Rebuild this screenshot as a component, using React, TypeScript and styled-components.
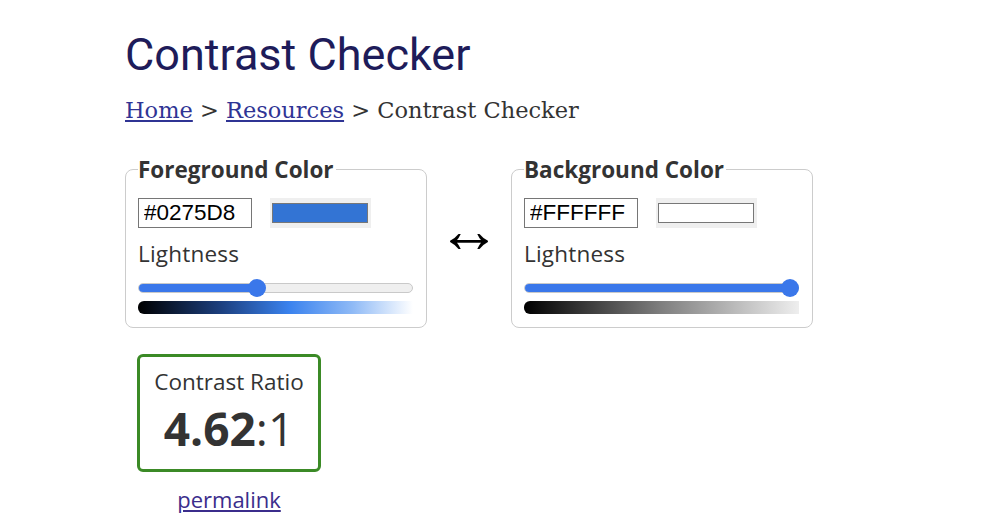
import React from "react";
import styled, { createGlobalStyle } from "styled-components";

const Global = createGlobalStyle`
  html, body { margin: 0; padding: 0; background: #ffffff; }
  body { font-family: "Open Sans", sans-serif; color: #333333; }
`;

const Page = styled.main`
  padding: 29px 0 0 125px;
`;

const Title = styled.h1`
  margin: 0;
  font-family: Roboto, sans-serif;
  font-weight: 400;
  font-size: 45px;
  line-height: 52px;
  color: #1e1c5a;
`;

const Crumbs = styled.nav`
  margin-top: 16px;
  font-family: "DejaVu Serif", serif;
  font-size: 22.5px;
  color: #333333;
`;

const CrumbLink = styled.a`
  color: #2f3494;
  text-decoration: underline;
`;

const Pickers = styled.div`
  display: flex;
  align-items: center;
  margin-top: 30px;
`;

const Box = styled.fieldset`
  box-sizing: border-box;
  width: 302px;
  margin: 0;
  padding: 0 13px 13px 12px;
  border: 1px solid #cccccc;
  border-radius: 8px;
  min-width: 0;
`;

const Legend = styled.legend`
  padding: 2px 2px 0 0;
  font-family: "Open Sans", sans-serif;
  font-weight: 700;
  font-size: 22.5px;
  line-height: 30px;
  color: #333333;
`;

const InputRow = styled.div`
  display: flex;
  gap: 18px;
  margin-top: 13px;
`;

const HexInput = styled.input`
  box-sizing: border-box;
  width: 114px;
  height: 30px;
  margin: 0;
  padding: 0 4px 0 5px;
  border: 1px solid #767676;
  border-radius: 0;
  font-family: "Liberation Sans", Arial, sans-serif;
  font-size: 22.5px;
  color: #000000;
  background: #ffffff;
  outline: none;
`;

const SwatchFrame = styled.div`
  box-sizing: border-box;
  width: 101px;
  height: 30px;
  padding: 5px 3px 5px 2px;
  background: #efefef;
`;

const Swatch = styled.div<{ $color: string }>`
  box-sizing: border-box;
  width: 100%;
  height: 100%;
  border: 1px solid #777777;
  background: ${(p) => p.$color};
`;

const Label = styled.div`
  margin-top: 11px;
  font-size: 22.5px;
  letter-spacing: 0.2px;
  line-height: 30px;
  color: #333333;
`;

const Slider = styled.div`
  position: relative;
  height: 20px;
  margin-top: 9px;
  display: flex;
  align-items: center;
`;

const Track = styled.div`
  box-sizing: border-box;
  width: 100%;
  height: 10px;
  border-radius: 5px;
  border: 1px solid #c9c9c9;
  background: #efefef;
  overflow: hidden;
  display: flex;
`;

const Fill = styled.div`
  height: 100%;
  background: #3a77ea;
`;

const Thumb = styled.div`
  position: absolute;
  top: 1px;
  width: 18px;
  height: 18px;
  border-radius: 50%;
  background: #3a77ea;
`;

const Gradient = styled.div<{ $stops: string }>`
  height: 13px;
  margin-top: 3px;
  border-radius: 6px 0 0 6px;
  background: linear-gradient(to right, ${(p) => p.$stops});
`;

const Swap = styled.div`
  width: 84px;
  margin-bottom: 22px;
  text-align: center;
  font-family: "Liberation Sans", sans-serif;
  font-size: 64px;
  line-height: 64px;
  color: #000000;
`;

const ResultColumn = styled.div`
  width: 184px;
  margin: 26px 0 0 12px;
  display: flex;
  flex-direction: column;
  align-items: center;
`;

const RatioBox = styled.div`
  box-sizing: border-box;
  width: 184px;
  height: 118px;
  padding-top: 10px;
  border: 3px solid #3b8a26;
  border-radius: 6px;
  text-align: center;
`;

const RatioLabel = styled.div`
  font-size: 22.5px;
  line-height: 30px;
  color: #333333;
`;

const RatioValue = styled.div`
  font-size: 46px;
  line-height: 62px;
  color: #333333;
`;

const Strong = styled.span`
  font-weight: 700;
`;

const Permalink = styled.a`
  margin-top: 12px;
  font-size: 22px;
  line-height: 30px;
  color: #3b2d8c;
  text-decoration: underline;
`;

type PickerProps = {
  title: string;
  hex: string;
  swatch: string;
  lightness: number;
  stops: string;
};

function Picker({ title, hex, swatch, lightness, stops }: PickerProps) {
  return (
    <Box>
      <Legend>{title}</Legend>
      <InputRow>
        <HexInput defaultValue={hex} aria-label={title} />
        <SwatchFrame>
          <Swatch $color={swatch} />
        </SwatchFrame>
      </InputRow>
      <Label>Lightness</Label>
      <Slider>
        <Track>
          <Fill style={{ width: `${lightness}%` }} />
        </Track>
        <Thumb style={{ left: `calc((100% - 18px) * ${lightness / 100})` }} />
      </Slider>
      <Gradient $stops={stops} />
    </Box>
  );
}

export default function App() {
  return (
    <>
      <Global />
      <Page>
        <Title>Contrast Checker</Title>
        <Crumbs>
          <CrumbLink href="#">Home</CrumbLink> &gt; <CrumbLink href="#">Resources</CrumbLink> &gt; Contrast Checker
        </Crumbs>
        <Pickers>
          <Picker
            title="Foreground Color"
            hex="#0275D8"
            swatch="#3374d4"
            lightness={42.7}
            stops="#000000 0%, #1c3f7e 30%, #3a82ee 55%, #8fbaf6 78%, #ffffff 100%"
          />
          <Swap>↔</Swap>
          <Picker
            title="Background Color"
            hex="#FFFFFF"
            swatch="#ffffff"
            lightness={100}
            stops="#000000 0%, #7f7f7f 50%, #eeeeee 100%"
          />
        </Pickers>
        <ResultColumn>
          <RatioBox>
            <RatioLabel>Contrast Ratio</RatioLabel>
            <RatioValue>
              <Strong>4.62</Strong>:1
            </RatioValue>
          </RatioBox>
          <Permalink href="#">permalink</Permalink>
        </ResultColumn>
      </Page>
    </>
  );
}
